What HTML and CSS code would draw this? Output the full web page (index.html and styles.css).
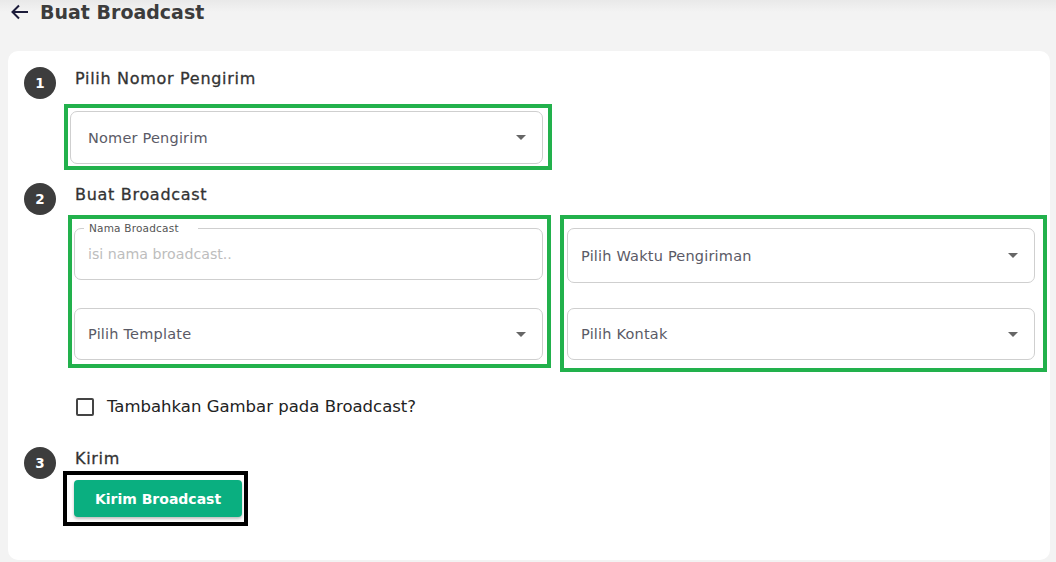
FILE: index.html
```html
<!DOCTYPE html>
<html lang="id">
<head>
    <meta charset="UTF-8">
    <title>Buat Broadcast</title>
    <link rel="stylesheet" href="styles.css">
</head>
<body>
    <header class="page-header">
        <span class="back-arrow">
            <svg width="18" height="16" viewBox="0 0 18 16"><path d="M17 8H2M8 1.5L1.5 8 8 14.5" fill="none" stroke="#1c1c3a" stroke-width="2"/></svg>
        </span>
        <h1>Buat Broadcast</h1>
    </header>
    <div class="card">
        <div class="step step-1">
            <div class="step-num">1</div>
            <div class="step-body">
                <h2>Pilih Nomor Pengirim</h2>
                <div class="hl-green box-sender">
                    <div class="field select"><span class="val">Nomer Pengirim</span><span class="caret"></span></div>
                </div>
            </div>
        </div>
        <div class="step step-2">
            <div class="step-num">2</div>
            <div class="step-body">
                <h2>Buat Broadcast</h2>
                <div class="two-col">
                    <div class="hl-green col-left">
                        <div class="field input">
                            <span class="legend">Nama Broadcast</span>
                            <span class="placeholder">isi nama broadcast..</span>
                        </div>
                        <div class="field select"><span class="val">Pilih Template</span><span class="caret"></span></div>
                    </div>
                    <div class="hl-green col-right">
                        <div class="field select tall"><span class="val">Pilih Waktu Pengiriman</span><span class="caret"></span></div>
                        <div class="field select"><span class="val">Pilih Kontak</span><span class="caret"></span></div>
                    </div>
                </div>
                <label class="check-row"><span class="checkbox"></span>Tambahkan Gambar pada Broadcast?</label>
            </div>
        </div>
        <div class="step step-3">
            <div class="step-num">3</div>
            <div class="step-body">
                <h2>Kirim</h2>
                <div class="hl-black">
                    <button class="btn-send">Kirim Broadcast</button>
                </div>
            </div>
        </div>
    </div>
</body>
</html>
```

FILE: styles.css
```css
body { margin: 0; font-family: "DejaVu Sans", "Open Sans", sans-serif; background: linear-gradient(#e9e9e9 0, #f3f3f3 12px, #f3f3f3 100%); color: #333; height: 562px; overflow: hidden; }
.page-header { display: flex; align-items: center; height: 24px; padding: 0 0 0 11px; }
.back-arrow { display: flex; width: 18px; margin-right: 11px; }
.page-header h1 { margin: 0; font-size: 19px; font-weight: 700; color: #3c3c3c; line-height: 24px; }
.card { margin: 27px 6px 0 8px; background: #fff; border-radius: 10px; padding: 16px 16px 30px 16px; height: 509px; box-sizing: border-box; }
.step { display: flex; }
.step-num { width: 32px; height: 32px; border-radius: 50%; background: #3d3d3d; color: #fff; font-weight: 700; font-size: 13.5px; display: flex; align-items: center; justify-content: center; flex: none; margin-right: 8px; }
.step-body { flex: 1; }
.step h2 { margin: 0 0 0 11px; font-size: 16px; font-weight: 400; letter-spacing: 0.7px; line-height: 24px; color: #333; -webkit-text-stroke: 0.3px #333; }
.step-1 h2 { margin-bottom: 13px; }
.step-2 { margin-top: 13px; }
.step-2 h2 { margin-bottom: 8px; }
.step-3 { margin-top: 29px; }
.step-3 .step-num { margin-top: 1px; }
.step-3 h2 { line-height: 24px; margin-top: 1px; margin-bottom: 0; }
.hl-green { border: 4px solid #22b14c; box-sizing: border-box; }
.box-sender { width: 488px; height: 66px; padding: 3px 5px 2px 2px; }
.field { border: 1px solid #cfcfcf; border-radius: 7px; box-sizing: border-box; height: 52px; display: flex; align-items: center; padding: 0 13px; position: relative; }
.box-sender .field { height: 53px; padding-left: 17px; }
.field .val { flex: 1; font-size: 14.5px; letter-spacing: 0.2px; color: #5a5a66; }
.caret { width: 0; height: 0; border-left: 5px solid transparent; border-right: 5px solid transparent; border-top: 5px solid #666; margin-right: 3px; }
.placeholder { font-size: 14.2px; color: #bdbdbd; }
.legend { position: absolute; left: 9px; top: -7px; background: #fff; padding: 0 19px 0 5px; font-size: 10.5px; letter-spacing: 0.2px; line-height: 12px; color: #555; }
.two-col { display: flex; gap: 9px; margin-left: 4px; }
.col-left { width: 483px; height: 153px; padding: 9px 4px 4px 2px; display: flex; flex-direction: column; gap: 28px; }
.col-right { width: 487px; height: 157px; padding: 9px 8px 8px 3px; display: flex; flex-direction: column; gap: 25px; }
.col-right .tall { height: 55px; }
.check-row { display: flex; align-items: center; margin: 25px 0 0 12px; font-size: 16.5px; line-height: 20px; color: #222; }
.checkbox { width: 14px; height: 14px; border: 2px solid #444; border-radius: 2px; margin-right: 13px; }
.hl-black { border: 4px solid #000; width: 185px; height: 55px; box-sizing: border-box; padding: 5px 2px 5px 7px; margin-left: -1px; }
.btn-send { width: 168px; height: 37px; border: none; border-radius: 4px; background: #0aaf80; color: #fff; font-family: inherit; font-weight: 700; font-size: 14px; box-shadow: 0 2px 3px rgba(0,0,0,0.25); cursor: pointer; }
```
